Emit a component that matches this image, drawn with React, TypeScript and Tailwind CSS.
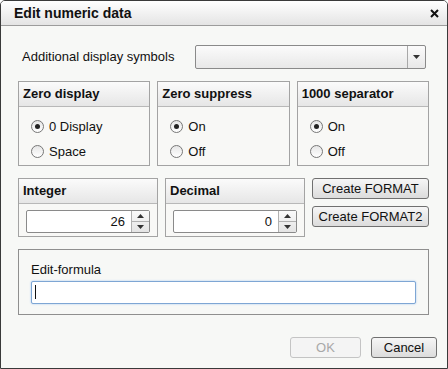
import React from "react";

const font = { fontFamily: '"Liberation Sans", Arial, sans-serif' };

function Radio({ checked, label }: { checked?: boolean; label: string }) {
  return (
    <div className="flex items-center gap-[5px] h-[25px]">
      <span className="w-[13px] h-[13px] rounded-full border border-[#777] bg-gradient-to-b from-[#e6e6e6] to-white flex items-center justify-center">
        {checked && <span className="w-[5px] h-[5px] rounded-full bg-[#222]" />}
      </span>
      <span className="text-[13px] text-[#111]">{label}</span>
    </div>
  );
}

function Group({ title, children, className }: { title: string; children: React.ReactNode; className?: string }) {
  return (
    <div className={`border border-[#a3a3a3] bg-[#f8f8f6] flex flex-col ${className ?? ""}`}>
      <div className="h-[25px] shrink-0 border-b border-[#b8b8b8] bg-gradient-to-b from-[#fbfbfb] to-[#e6e6e6] px-[4px] flex items-center text-[13px] font-bold text-[#111]">
        {title}
      </div>
      {children}
    </div>
  );
}

function Spin({ value }: { value: string }) {
  return (
    <div className="mx-[7px] mt-[6px] h-[23px] flex border border-[#8a8a8a] rounded-[2px] bg-white">
      <div className="flex-1 flex items-center justify-end pr-[6px] text-[13px] text-[#111]">{value}</div>
      <div className="w-[18px] flex flex-col border-l border-[#b0b0b0] bg-gradient-to-b from-[#fafafa] to-[#e4e4e4]">
        <div className="flex-1 flex items-center justify-center border-b border-[#b0b0b0]">
          <svg width="7" height="4" viewBox="0 0 7 4"><path d="M3.5 0L7 4H0z" fill="#333" /></svg>
        </div>
        <div className="flex-1 flex items-center justify-center">
          <svg width="7" height="4" viewBox="0 0 7 4"><path d="M0 0h7L3.5 4z" fill="#333" /></svg>
        </div>
      </div>
    </div>
  );
}

function Btn({ children, disabled, className }: { children: React.ReactNode; disabled?: boolean; className?: string }) {
  return (
    <button
      className={`h-[21px] rounded-[3px] border text-[13px] flex items-center justify-center ${
        disabled
          ? "border-[#c4c4c4] bg-[#f4f4f4] text-[#a8a8a8]"
          : "border-[#707070] bg-gradient-to-b from-[#f6f6f6] to-[#dcdcdc] text-[#111]"
      } ${className ?? ""}`}
    >
      {children}
    </button>
  );
}

export default function App() {
  return (
    <div style={font} className="w-[448px] h-[369px] bg-white">
      <div className="w-[448px] h-[369px] border border-[#3a3a3a] rounded-t-[5px] bg-[#f7f8f6] flex flex-col overflow-hidden">
        {/* title bar */}
        <div className="h-[25px] shrink-0 border-b border-[#9c9c9c] bg-gradient-to-b from-white to-[#e4e4e4] flex items-center justify-between pl-[13px] pr-[8px]">
          <span className="text-[14px] font-bold text-[#111]">Edit numeric data</span>
          <svg width="9" height="9" viewBox="0 0 9 9">
            <path d="M1 1L8 8M8 1L1 8" stroke="#111" strokeWidth="2" />
          </svg>
        </div>

        <div className="flex flex-col pl-[17px] pr-[18px]">
          {/* symbols */}
          <div className="mt-[19px] flex items-center">
            <span className="w-[177px] pl-[4px] text-[13px] text-[#111]">Additional display symbols</span>
            <div className="w-[231px] h-[24px] flex border border-[#8a8a8a] rounded-[2px] bg-gradient-to-b from-[#fbfbfb] to-[#e8e8e8]">
              <div className="flex-1" />
              <div className="w-[18px] border-l border-[#a8a8a8] flex items-center justify-center">
                <svg width="7" height="4" viewBox="0 0 7 4"><path d="M0 0h7L3.5 4z" fill="#333" /></svg>
              </div>
            </div>
          </div>

          {/* options */}
          <div className="mt-[12px] grid grid-cols-3 gap-[7px] h-[85px]">
            <Group title="Zero display">
              <div className="px-[12px] pt-[7px]">
                <Radio checked label="0 Display" />
                <Radio label="Space" />
              </div>
            </Group>
            <Group title="Zero suppress">
              <div className="px-[12px] pt-[7px]">
                <Radio checked label="On" />
                <Radio label="Off" />
              </div>
            </Group>
            <Group title="1000 separator">
              <div className="px-[12px] pt-[7px]">
                <Radio checked label="On" />
                <Radio label="Off" />
              </div>
            </Group>
          </div>

          {/* numbers */}
          <div className="mt-[12px] flex gap-[7px] h-[59px]">
            <Group title="Integer" className="w-[140px]">
              <Spin value="26" />
            </Group>
            <Group title="Decimal" className="w-[140px]">
              <Spin value="0" />
            </Group>
            <div className="flex-1 flex flex-col gap-[7px]">
              <Btn>Create FORMAT</Btn>
              <Btn>Create FORMAT2</Btn>
            </div>
          </div>

          {/* formula */}
          <div className="mt-[12px] h-[66px] border border-[#8f8f8f] flex flex-col px-[12px]">
            <span className="mt-[10px] text-[13px] text-[#111]">Edit-formula</span>
            <div className="mt-[1px] h-[23px] border border-[#7ea6d4] rounded-[2px] bg-white shadow-[0_0_2px_#9cc3ee] flex items-center pl-[3px]">
              <span className="w-[1px] h-[14px] bg-[#111]" />
            </div>
          </div>
        </div>

        {/* footer */}
        <div className="mt-auto mb-[10px] flex justify-end gap-[10px] pr-[10px]">
          <Btn disabled className="w-[71px]">OK</Btn>
          <Btn className="w-[66px]">Cancel</Btn>
        </div>
      </div>
    </div>
  );
}
